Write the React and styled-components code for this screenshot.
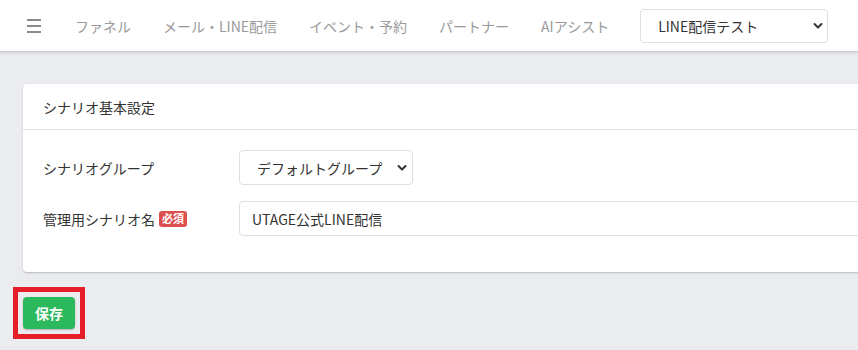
import React from "react";
import styled, { createGlobalStyle } from "styled-components";

const NAV_ITEMS = ["ファネル", "メール・LINE配信", "イベント・予約", "パートナー", "AIアシスト"];

const Chevron = () => (
  <svg width="10" height="8" viewBox="0 0 10 8">
    <path d="M1.5 2 L5 5.5 L8.5 2" fill="none" stroke="#333" strokeWidth="2" strokeLinecap="round" strokeLinejoin="round" />
  </svg>
);

const App = () => {
  return (
    <>
      <GlobalStyle />
      <Header>
        <Burger>
          <span />
          <span />
          <span />
        </Burger>
        <Nav>
          {NAV_ITEMS.map((item) => (
            <NavItem key={item}>{item}</NavItem>
          ))}
        </Nav>
        <SelectWrap $width="188px">
          <Select $height="34px" defaultValue="line">
            <option value="line">LINE配信テスト</option>
          </Select>
          <SelectIcon $right="5px">
            <Chevron />
          </SelectIcon>
        </SelectWrap>
      </Header>

      <Main>
        <Card>
          <CardHeader>シナリオ基本設定</CardHeader>
          <CardBody>
            <FormRow>
              <Label>シナリオグループ</Label>
              <SelectWrap $width="174px">
                <Select $height="35px" defaultValue="default">
                  <option value="default">デフォルトグループ</option>
                </Select>
                <SelectIcon $right="6px">
                  <Chevron />
                </SelectIcon>
              </SelectWrap>
            </FormRow>
            <FormRow>
              <Label>
                管理用シナリオ名
                <Badge>必須</Badge>
              </Label>
              <TextInput defaultValue="UTAGE公式LINE配信" />
            </FormRow>
          </CardBody>
        </Card>

        <Highlight>
          <SaveButton>保存</SaveButton>
        </Highlight>
      </Main>
    </>
  );
};

export default App;

const GlobalStyle = createGlobalStyle`
  * {
    box-sizing: border-box;
  }
  body {
    margin: 0;
    background: #ebecef;
    font-family: "Noto Sans CJK JP", "Noto Sans", "Liberation Sans", sans-serif;
    color: #333;
    overflow: hidden;
  }
`;

const Header = styled.header`
  display: flex;
  align-items: center;
  height: 52px;
  padding-left: 27px;
  background: #fff;
  border-bottom: 1px solid #c9cdd3;
  box-shadow: 0 1px 3px rgba(0, 0, 0, 0.12);
`;

const Burger = styled.div`
  display: flex;
  flex-direction: column;
  gap: 4px;
  width: 14px;
  margin-right: 34px;

  span {
    display: block;
    height: 2px;
    background: #8a8a8f;
  }
`;

const Nav = styled.nav`
  display: flex;
  gap: 32px;
  margin-right: 31px;
`;

const NavItem = styled.a`
  font-size: 14px;
  color: #9a9a9a;
  white-space: nowrap;
  cursor: pointer;
`;

const SelectWrap = styled.div`
  position: relative;
  width: ${(p) => p.$width};
`;

const Select = styled.select`
  appearance: none;
  width: 100%;
  height: ${(p) => p.$height};
  padding: 0 28px 0 17px;
  background: #fff;
  border: 1px solid #dcdfe3;
  border-radius: 4px;
  font-family: inherit;
  font-size: 14px;
  color: #333;
`;

const SelectIcon = styled.span`
  position: absolute;
  top: 50%;
  right: ${(p) => p.$right};
  display: flex;
  transform: translateY(-50%);
  pointer-events: none;
`;

const Main = styled.main`
  padding: 32px 0 0 23px;
`;

const Card = styled.section`
  width: 900px;
  background: #fff;
  border-radius: 4px;
  box-shadow: 0 1px 2px rgba(0, 0, 0, 0.22);
`;

const CardHeader = styled.div`
  display: flex;
  align-items: center;
  height: 46px;
  padding: 0 20px;
  border-bottom: 1px solid #dee1e4;
  font-size: 14px;
`;

const CardBody = styled.div`
  display: flex;
  flex-direction: column;
  gap: 16px;
  padding: 20px 20px 36px;
`;

const FormRow = styled.div`
  display: flex;
  align-items: center;
`;

const Label = styled.label`
  display: flex;
  align-items: center;
  gap: 4px;
  width: 196px;
  font-size: 14px;
  color: #333;
`;

const Badge = styled.span`
  display: inline-flex;
  align-items: center;
  height: 16px;
  padding: 0 3px;
  background: #dc4f4f;
  border-radius: 3px;
  color: #fff;
  font-size: 11px;
  font-weight: 700;
  line-height: 1;
`;

const TextInput = styled.input`
  flex: 1;
  height: 35px;
  padding: 0 12px;
  border: 1px solid #dcdfe3;
  border-radius: 4px;
  font-family: inherit;
  font-size: 14px;
  color: #333;
`;

const Highlight = styled.div`
  display: inline-flex;
  margin: 15px 0 0 -10px;
  padding: 5px;
  border: 5px solid #e61e2a;
`;

const SaveButton = styled.button`
  width: 52px;
  height: 32px;
  padding: 0;
  background: #2cb85c;
  border: none;
  border-radius: 4px;
  box-shadow: 0 1px 2px rgba(0, 0, 0, 0.25);
  color: #fff;
  font-family: inherit;
  font-size: 14px;
  font-weight: 700;
  cursor: pointer;
`;
